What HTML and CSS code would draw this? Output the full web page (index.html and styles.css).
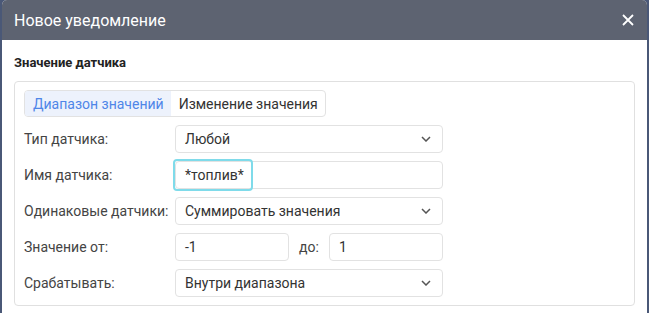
FILE: index.html
```html
<!DOCTYPE html>
<html>
<head>
  <meta charset="UTF-8">
  <title>Новое уведомление</title>
  <link rel="stylesheet" href="styles.css">
</head>
<body>
  <div class="dialog">
    <div class="dialog-head">
      <span class="dialog-title">Новое уведомление</span>
      <svg class="close" width="12" height="12" viewBox="0 0 12 12"><path d="M1 1L11 11M11 1L1 11" stroke="#fff" stroke-width="1.8"/></svg>
    </div>

    <div class="dialog-body">
      <div class="section-title">Значение датчика</div>

      <div class="box">
        <div class="tabs">
          <span class="tab active">Диапазон значений</span>
          <span class="tab">Изменение значения</span>
        </div>

        <div class="form">
          <label>Тип датчика:</label>
          <div class="field select"><span>Любой</span><svg class="chev" width="10" height="6" viewBox="0 0 10 6"><path d="M1 1L5 5L9 1" fill="none" stroke="#555" stroke-width="1.5"/></svg></div>

          <label>Имя датчика:</label>
          <div class="field input hl-wrap"><span>*топлив*</span><b class="highlight"></b></div>

          <label>Одинаковые датчики:</label>
          <div class="field select"><span>Суммировать значения</span><svg class="chev" width="10" height="6" viewBox="0 0 10 6"><path d="M1 1L5 5L9 1" fill="none" stroke="#555" stroke-width="1.5"/></svg></div>

          <label>Значение от:</label>
          <div class="range">
            <div class="field input small">-1</div>
            <span class="to">до:</span>
            <div class="field input small">1</div>
          </div>

          <label>Срабатывать:</label>
          <div class="field select"><span>Внутри диапазона</span><svg class="chev" width="10" height="6" viewBox="0 0 10 6"><path d="M1 1L5 5L9 1" fill="none" stroke="#555" stroke-width="1.5"/></svg></div>
        </div>
      </div>
    </div>
  </div>
</body>
</html>
```

FILE: styles.css
```css
html, body { height: 100%; }
body { margin: 0; background: #4a5877; font-family: Roboto, "Liberation Sans", sans-serif; color: #333; }

.dialog { margin: 0 2px; height: 100%; background: #fff; border-radius: 5px 5px 0 0; overflow: hidden; }
.dialog-head { height: 40px; background: #5d6371; color: #fff; display: flex; align-items: center; justify-content: space-between; padding: 0 13px 0 12px; }
.dialog-title { font-size: 16px; }

.dialog-body { padding: 15px 12px 0 12px; }
.section-title { font-size: 13px; font-weight: bold; color: #222; margin-bottom: 11px; }

.box { border: 1px solid #e0e0e0; border-radius: 4px; padding: 8px 9px 7px 9px; box-sizing: border-box; height: 225px; }

.tabs { display: inline-flex; border: 1px solid #e2e2e2; border-radius: 4px; overflow: hidden; height: 25px; font-size: 14px; }
.tab { display: flex; align-items: center; padding: 0 7px 0 8px; color: #333; }
.tab.active { background: #edf2fc; color: #4f86e8; }

.form { display: grid; grid-template-columns: 151px 268px; row-gap: 8px; margin-top: 8px; font-size: 14px; }
.form label { display: flex; align-items: center; color: #444; }

.field { height: 28px; box-sizing: border-box; border: 1px solid #e2e2e2; border-radius: 4px; display: flex; align-items: center; padding: 0 9px; color: #333; }
.select { justify-content: space-between; }
.chev { margin-right: 2px; }

.hl-wrap { position: relative; }
.highlight { position: absolute; left: -3px; top: -3px; width: 80px; height: 32px; border: 2px solid #7fdbea; border-radius: 4px; box-sizing: border-box; }

.range { display: flex; align-items: center; }
.range .small { width: 114px; }
.to { width: 40px; text-align: center; color: #444; }
```
